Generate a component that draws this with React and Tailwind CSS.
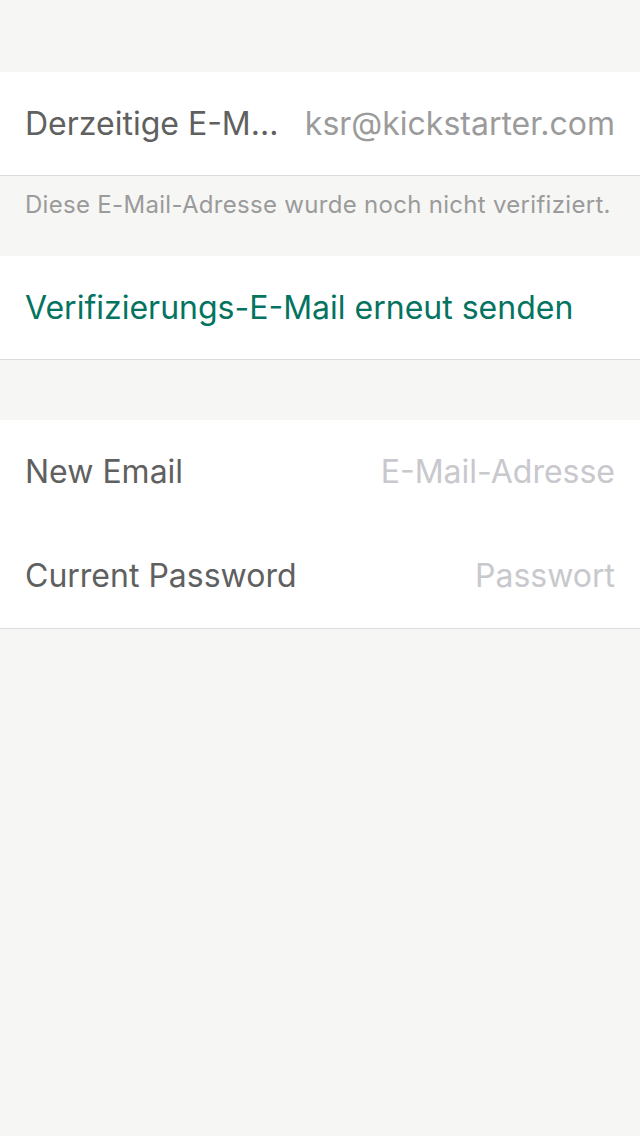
import React from "react";

const font = { fontFamily: "Inter, Roboto, sans-serif" };

const Row = ({ label, placeholder }) => (
  <div className="flex items-center justify-between h-[104px] px-[25px] gap-6">
    <span className="text-[32px] text-[#5f6060] whitespace-nowrap">{label}</span>
    <span className="text-[32px] text-[#c8c8cd] whitespace-nowrap">{placeholder}</span>
  </div>
);

export default function App() {
  return (
    <div className="min-h-[1136px] w-[640px] bg-[#f6f6f4]" style={font}>
      <div className="h-[72px]" />

      <div className="bg-white border-b border-[#dcdcdc]">
        <div className="flex items-center h-[103px] px-[25px]">
          <span className="text-[32px] text-[#5f6060] whitespace-nowrap">Derzeitige E-M...</span>
          <span className="ml-auto text-[32px] text-[#9b9b9b] whitespace-nowrap">ksr@kickstarter.com</span>
        </div>
      </div>

      <div className="h-[80px] px-[25px] pt-[14px]">
        <p className="text-[24px] leading-[30px] tracking-[0.3px] text-[#9b9b9b] whitespace-nowrap">
          Diese E-Mail-Adresse wurde noch nicht verifiziert.
        </p>
      </div>

      <div className="bg-white border-b border-[#dcdcdc]">
        <div className="flex items-center h-[103px] px-[25px]">
          <span className="text-[32px] text-[#04735f] whitespace-nowrap">Verifizierungs-E-Mail erneut senden</span>
        </div>
      </div>

      <div className="h-[60px]" />

      <div className="bg-white border-b border-[#dcdcdc]">
        <Row label="New Email" placeholder="E-Mail-Adresse" />
        <Row label="Current Password" placeholder="Passwort" />
      </div>
    </div>
  );
}
